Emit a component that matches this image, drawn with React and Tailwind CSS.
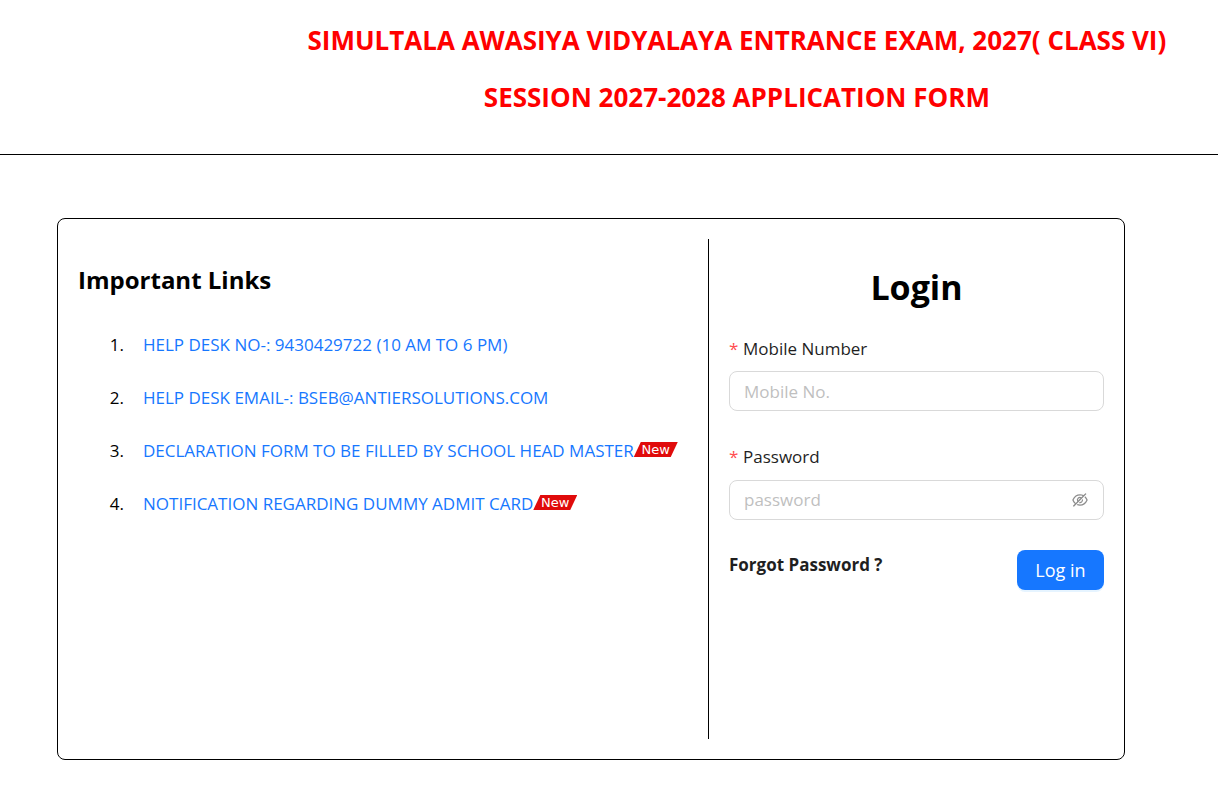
import { useState } from "react";
import { AiOutlineEye, AiOutlineEyeInvisible } from "react-icons/ai";

const links = [
  { label: "HELP DESK NO-: 9430429722 (10 AM TO 6 PM)", href: "#helpdesk" },
  { label: "HELP DESK EMAIL-: BSEB@ANTIERSOLUTIONS.COM", href: "#email" },
  { label: "DECLARATION FORM TO BE FILLED BY SCHOOL HEAD MASTER", href: "#declaration", isNew: true },
  { label: "NOTIFICATION REGARDING DUMMY ADMIT CARD", href: "#notification", isNew: true },
];

function NewBadge() {
  return (
    <span className="mb-[2px] flex h-[15px] w-[44px] items-center justify-center bg-[#e00b0b] font-['DejaVu_Sans',sans-serif] text-[13px] leading-none text-white [clip-path:polygon(16%_0,100%_0,84%_100%,0_100%)]">
      New
    </span>
  );
}

function FieldLabel({ htmlFor, children }) {
  return (
    <label htmlFor={htmlFor} className="flex items-center gap-1 text-[17px] leading-6 text-[#1f1f1f]">
      <span className="w-[10px] text-[#ff4d4f]">*</span>
      {children}
    </label>
  );
}

export default function App() {
  const [showPassword, setShowPassword] = useState(false);

  return (
    <div className="bg-white font-['Open_Sans','Noto_Sans',sans-serif] text-black">
      <header className="border-b border-black pt-5 pb-[37px] pl-[21%] text-center text-[26px] font-bold text-[#ff0000]">
        <h1 className="leading-10">SIMULTALA AWASIYA VIDYALAYA ENTRANCE EXAM, 2027( CLASS VI)</h1>
        <h2 className="mt-[17px] leading-10">SESSION 2027-2028 APPLICATION FORM</h2>
      </header>

      <main className="mt-[63px] mr-[93px] mb-6 ml-[57px] grid min-h-[542px] grid-cols-[35fr_22fr] rounded-lg border border-black p-5">
        <section>
          <h2 className="mt-[23px] text-2xl leading-9 font-bold">Important Links</h2>
          <ol className="mt-5">
            {links.map((link, i) => (
              <li key={link.href} className="flex h-[53px] items-center text-[17px] whitespace-nowrap">
                <span className="mr-[19px] w-[46px] text-right">{i + 1}.</span>
                <a href={link.href} className="flex items-center text-[#1677ff]">
                  {link.label}
                  {link.isNew && <NewBadge />}
                </a>
              </li>
            ))}
          </ol>
        </section>

        <section className="border-l border-black pl-5">
          <h2 className="mt-[23px] text-center text-[34px] leading-[50px] font-bold">Login</h2>
          <form onSubmit={(e) => e.preventDefault()}>
            <div className="mt-[25px]">
              <FieldLabel htmlFor="mobile">Mobile Number</FieldLabel>
              <input
                id="mobile"
                type="tel"
                placeholder="Mobile No."
                className="mt-[10px] h-10 w-full rounded-lg border border-[#d9d9d9] px-[14px] text-[17px] outline-none placeholder:text-[#bfbfbf] focus:border-[#1677ff]"
              />
            </div>

            <div className="mt-[34px]">
              <FieldLabel htmlFor="password">Password</FieldLabel>
              <div className="mt-[11px] flex h-10 items-center rounded-lg border border-[#d9d9d9] px-[14px] focus-within:border-[#1677ff]">
                <input
                  id="password"
                  type={showPassword ? "text" : "password"}
                  placeholder="password"
                  className="min-w-0 flex-1 text-[17px] outline-none placeholder:text-[#bfbfbf]"
                />
                <button
                  type="button"
                  aria-label={showPassword ? "Hide password" : "Show password"}
                  onClick={() => setShowPassword(!showPassword)}
                  className="text-[#8c8c8c]"
                >
                  {showPassword ? <AiOutlineEye size={18} /> : <AiOutlineEyeInvisible size={18} />}
                </button>
              </div>
            </div>

            <div className="mt-[30px] flex items-start justify-between">
              <a href="#forgot" className="pt-[3px] text-[17px] leading-6 font-bold text-[#1f1f1f]">
                Forgot Password ?
              </a>
              <button
                type="submit"
                className="h-10 w-[87px] rounded-lg bg-[#1677ff] text-lg text-white shadow-[0_2px_0_rgba(5,145,255,0.1)]"
              >
                Log in
              </button>
            </div>
          </form>
        </section>
      </main>
    </div>
  );
}
